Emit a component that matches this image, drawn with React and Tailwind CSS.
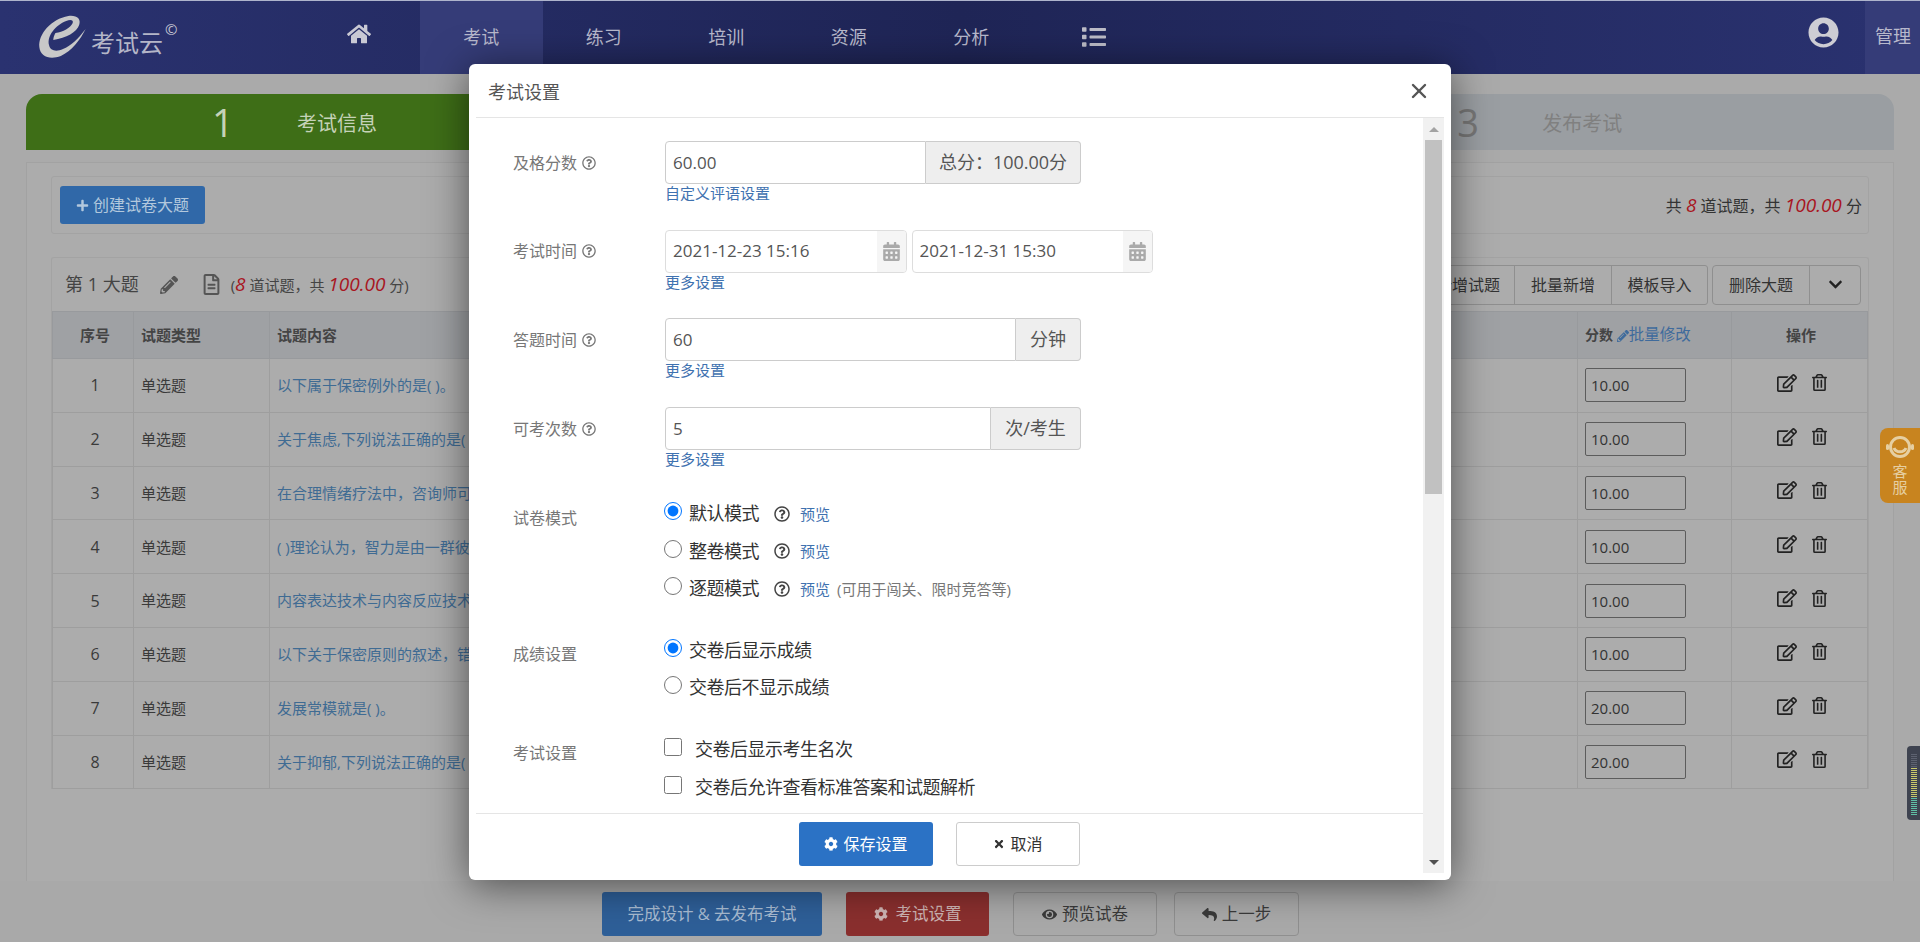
import { FaHome, FaList, FaUserCircle, FaPlus, FaPencilAlt, FaRegFileAlt, FaChevronDown, FaRegEdit, FaRegTrashAlt, FaRegQuestionCircle, FaCalendarAlt, FaCog, FaTimes, FaEye, FaReply } from 'react-icons/fa';
import { X } from 'lucide-react';

const navItems = ['考试', '练习', '培训', '资源', '分析'];

const questions = [
  { no: 1, text: '以下属于保密例外的是( )。', score: '10.00' },
  { no: 2, text: '关于焦虑,下列说法正确的是( )。', score: '10.00' },
  { no: 3, text: '在合理情绪疗法中，咨询师可以( )。', score: '10.00' },
  { no: 4, text: '( )理论认为，智力是由一群彼此( )。', score: '10.00' },
  { no: 5, text: '内容表达技术与内容反应技术的区别( )。', score: '10.00' },
  { no: 6, text: '以下关于保密原则的叙述，错误的是( )。', score: '10.00' },
  { no: 7, text: '发展常模就是( )。', score: '20.00' },
  { no: 8, text: '关于抑郁,下列说法正确的是( )。', score: '20.00' },
];

const Logo = () => (
  <svg width="56" height="46" viewBox="0 0 52 46" className="shrink-0" preserveAspectRatio="none">
    <path d="M4 33C3 20 15 5 31 2c8-1 12 3 10 9-2 7-12 13-24 15 0-3 1-5 2-7 7-1 14-5 16-10 1-3-2-4-6-2C19 11 11 22 13 31c1 6 7 7 13 4 7-3 14-10 21-20-5 11-13 22-23 27-10 4-19 1-20-9z" fill="#c8c8c8" />
  </svg>
);

const Headset = () => (
  <svg width="30" height="30" viewBox="0 0 30 30">
    <circle cx="15" cy="14" r="9.5" fill="none" stroke="#e6cfa2" strokeWidth="3" />
    <path d="M9 15c2 5 10 5 12 0" fill="none" stroke="#e6cfa2" strokeWidth="3" />
    <rect x="1" y="11" width="3" height="6" rx="1.5" fill="#e6cfa2" />
    <rect x="26" y="11" width="3" height="6" rx="1.5" fill="#e6cfa2" />
  </svg>
);

const Step = ({ no, title, className, numClass, titleClass }) => (
  <div className={`flex-1 flex items-center pl-[186px] ${className}`}>
    <span className={`w-[20px] text-[38px] leading-none ${numClass}`}>{no}</span>
    <span className={`ml-[65px] mt-[4px] text-[20px] ${titleClass}`}>{title}</span>
  </div>
);

const FormRow = ({ label, link, children }) => (
  <div className="flex mb-[23.7px] h-[65px]">
    <div className="w-[152px] h-[43px] flex items-center text-[16px] text-[#777]">
      {label}
      <FaRegQuestionCircle className="ml-[5px] text-[14px] text-[#777]" />
    </div>
    <div>
      <div className="flex h-[43px] w-[416px]">{children}</div>
      <a className="block -mt-[2px] h-[22px] leading-[22px] text-[15px] text-[#3f72b0]">{link}</a>
    </div>
  </div>
);

const TextGroup = ({ value, addon, addonClass }) => (
  <>
    <input defaultValue={value} className="flex-1 min-w-0 border border-[#ccc] rounded-l-[4px] px-[7px] text-[17px] text-[#555] outline-none" />
    <span className={`flex items-center justify-center border border-l-0 border-[#ccc] rounded-r-[4px] bg-[#eee] text-[18px] text-[#555] ${addonClass}`}>{addon}</span>
  </>
);

const DateBox = ({ value }) => (
  <div className="flex w-[242px] h-[43px] border border-[#ddd] rounded-[4px] overflow-hidden">
    <input defaultValue={value} className="flex-1 min-w-0 px-[7px] text-[17px] text-[#555] outline-none" />
    <span className="w-[29px] flex items-center justify-center bg-[#f5f5f5] text-[#aaa] text-[19px]"><FaCalendarAlt /></span>
  </div>
);

const ModeRadio = ({ name, label, checked, children }) => (
  <div className="flex items-center h-[37.5px] text-[18px] text-[#333]">
    <input type="radio" name={name} defaultChecked={checked} className="w-[18px] h-[18px] -mt-[5px] -ml-[1px] accent-[#0075ff]" />
    <span className="ml-[7px] tracking-[-0.5px]">{label}</span>
    {children}
  </div>
);

const ModeExtra = ({ note }) => (
  <>
    <FaRegQuestionCircle className="ml-[15px] text-[16px] text-[#444]" />
    <a className="ml-[10px] mt-[1px] text-[15px] text-[#3f72b0]">预览</a>
    {note && <span className="ml-[7px] mt-[1px] text-[15px] text-[#777]">{note}</span>}
  </>
);

const CheckItem = ({ label }) => (
  <label className="flex items-center h-[38px] text-[18px] text-[#333]">
    <input type="checkbox" className="w-[18px] h-[18px] -mt-[4px] -ml-[1px]" />
    <span className="ml-[13px] tracking-[-0.5px]">{label}</span>
  </label>
);

const App = () => {
  return (
    <div className="relative h-[942px] overflow-hidden flex flex-col bg-[#aaa] font-['Open_Sans','Noto_Sans_CJK_SC',sans-serif]">
      <nav className="h-[74px] shrink-0 flex border-t border-[#aeb4cc] bg-[linear-gradient(90deg,#2a3270,#1f2556_50%,#2a3270)] text-[#b8b9cc]">
        <div className="w-[298px] flex items-start pl-[35px] pt-[13px]">
          <Logo />
          <span className="mt-[14px] text-[24px] leading-[30px] text-[#b4b6c8]">考试云</span>
          <span className="mt-[8px] ml-[2px] text-[15px] leading-none text-[#c4c4d2]">©</span>
        </div>
        <a className="w-[122px] flex items-center justify-center text-[#c9c9d4] text-[24px] pb-[8px]"><FaHome /></a>
        {navItems.map((item, i) => (
          <a key={item} className={`w-[122.5px] flex items-center justify-center text-[18px] ${i === 0 ? 'bg-[#353c78]' : ''}`}>{item}</a>
        ))}
        <a className="w-[122px] flex items-center justify-center text-[24px] text-[#bdbdc8] pb-[2px]"><FaList /></a>
        <div className="flex-1 flex justify-end">
          <span className="flex items-start pt-[16px] pr-[26px] text-[31px] text-[#cdcdd4]"><FaUserCircle /></span>
          <a className="w-[55px] bg-[#353c78] flex items-center pl-[10px] pb-[2px] text-[18px]">管理</a>
        </div>
      </nav>

      <main className="flex-1 min-h-0 flex flex-col px-[26px] pt-[20px]">
        <div className="h-[56px] shrink-0 flex rounded-t-[16px] overflow-hidden">
          <Step no="1" title="考试信息" className="bg-[#3e6e17]" numClass="text-[#c5d2b8]" titleClass="text-[#c5d2b8]" />
          <Step no="2" title="设计试卷" className="bg-[#9a9ea2]" numClass="text-[#777]" titleClass="text-[#808080]" />
          <Step no="3" title="发布考试" className="bg-[#9a9ea2]" numClass="text-[#777]" titleClass="text-[#808080]" />
        </div>

        <div className="flex-1 min-h-0 mt-[12px] border border-b-0 border-[#a2a2a2] bg-[#acacac] px-[24px] pt-[13px]">
          <div className="h-[58px] flex items-center justify-between border border-[#a3a3a3] rounded-[3px] pl-[8px] pr-[6px]">
            <button className="h-[38px] w-[145px] flex items-center justify-center gap-[4px] rounded-[3px] bg-[#3068a8] text-[16px] text-[#b3c8dd]">
              <FaPlus className="text-[13px]" />创建试卷大题
            </button>
            <p className="text-[16px] text-[#333]">
              共 <em className="text-[19px] text-[#a8161f]">8</em> 道试题，共 <em className="text-[19px] text-[#a8161f]">100.00</em> 分
            </p>
          </div>

          <section className="mt-[23px] border border-b-0 border-[#a3a3a3] rounded-t-[3px]">
            <div className="h-[53px] flex items-center justify-between pl-[13px] pr-[7px]">
              <div className="flex items-center text-[#444]">
                <span className="text-[18px]">第 1 大题</span>
                <FaPencilAlt className="ml-[21px] text-[18px] text-[#555]" />
                <FaRegFileAlt className="ml-[23px] text-[21px] text-[#555]" />
                <span className="ml-[9px] text-[15px]">
                  (<em className="text-[19px] text-[#a8161f]">8</em> 道试题，共 <em className="text-[19px] text-[#a8161f]">100.00</em> 分)
                </span>
              </div>
              <div className="flex gap-[4px] text-[16px] text-[#333]">
                <div className="flex h-[40px] border border-[#8f8f8f] rounded-[3px]">
                  <span className="px-[14px] flex items-center">新增试题</span>
                  <span className="w-[97px] flex items-center justify-center border-l border-[#8f8f8f]">批量新增</span>
                  <span className="w-[96px] flex items-center justify-center border-l border-[#8f8f8f]">模板导入</span>
                </div>
                <div className="flex h-[40px] border border-[#8f8f8f] rounded-[4px]">
                  <span className="w-[96px] flex items-center justify-center">删除大题</span>
                  <span className="w-[51px] flex items-center justify-center border-l border-[#8f8f8f] text-[15px] text-[#222]"><FaChevronDown /></span>
                </div>
              </div>
            </div>

            <table className="w-full table-fixed border-collapse text-[15px] text-[#3a3a3a]">
              <colgroup>
                <col className="w-[81px]" />
                <col className="w-[136px]" />
                <col />
                <col className="w-[154px]" />
                <col className="w-[136px]" />
              </colgroup>
              <thead>
                <tr className="h-[47px] bg-[#9fa1a4] font-bold text-[#444]">
                  <th className="border border-[#989a9d] text-center pl-[4px]">序号</th>
                  <th className="border border-[#989a9d] text-left pl-[7px]">试题类型</th>
                  <th className="border border-[#989a9d] text-left pl-[7px]">试题内容</th>
                  <th className="border border-[#989a9d] text-left pl-[7px] text-[14px]">
                    分数 <a className="font-normal text-[15.5px] text-[#3f6b9c]"><FaPencilAlt className="inline text-[12px]" />批量修改</a>
                  </th>
                  <th className="border border-[#989a9d] text-center pl-[3px]">操作</th>
                </tr>
              </thead>
              <tbody>
                {questions.map((q) => (
                  <tr key={q.no} className="h-[53.8px]">
                    <td className="border border-[#9e9e9e] text-center pl-[4px] text-[16px]">{q.no}</td>
                    <td className="border border-[#9e9e9e] pl-[7px]">单选题</td>
                    <td className="border border-[#9e9e9e] pl-[7px] text-[#3f6b93]">{q.text}</td>
                    <td className="border border-[#9e9e9e] pl-[7px]">
                      <input defaultValue={q.score} className="block w-[101px] h-[34px] rounded-[2px] border border-[#5c5c5c] px-[5px] text-[15px] text-[#333] outline-none" />
                    </td>
                    <td className="border border-[#9e9e9e]">
                      <div className="flex items-center justify-center gap-[14px] pl-[6px] -mt-[5px] text-[#222]">
                        <FaRegEdit className="text-[20px]" />
                        <FaRegTrashAlt className="text-[17px]" />
                      </div>
                    </td>
                  </tr>
                ))}
              </tbody>
            </table>
          </section>
        </div>
      </main>

      <footer className="h-[61px] shrink-0 flex items-start pt-[11px] pl-[602px] bg-[#a9a9a9] text-[16.5px]">
        <button className="w-[220px] h-[44px] rounded-[3px] bg-[#2e5f98] text-[#a9bcd2]">完成设计 &amp; 去发布考试</button>
        <button className="ml-[24px] w-[143px] h-[44px] flex items-center justify-center gap-[8px] rounded-[3px] bg-[#8a2f2e] text-[#cdb4b3]"><FaCog className="text-[14px]" />考试设置</button>
        <button className="ml-[24px] w-[144px] h-[44px] flex items-center justify-center gap-[5px] rounded-[4px] border border-[#8f8f8f] text-[#3a3a3a]"><FaEye className="text-[15px]" />预览试卷</button>
        <button className="ml-[17px] w-[125px] h-[44px] flex items-center justify-center gap-[5px] rounded-[4px] border border-[#8f8f8f] text-[#3a3a3a]"><FaReply className="text-[15px]" />上一步</button>
      </footer>

      <div className="absolute right-0 top-[428px] w-[40px] h-[75px] pt-[5px] flex flex-col items-center rounded-l-[8px] bg-[#c8841f] text-[#e6cfa2]">
        <Headset />
        <span className="text-[15px] leading-[16px] w-[16px] text-center">客服</span>
      </div>

      <div className="absolute right-0 top-[746px] w-[13px] h-[74px] rounded-l-[4px] bg-[#3e4350] pl-[4px] pt-[8px]">
        <div className="h-[14px] w-[6px] bg-[repeating-linear-gradient(#5d6270_0_1px,#3e4350_1px_2px)]" />
        <div className="h-[30px] w-[6px] bg-[repeating-linear-gradient(#c9c86a_0_1px,#3e4350_1px_2px)]" />
        <div className="h-[18px] w-[6px] bg-[repeating-linear-gradient(#5fbfa5_0_1px,#3e4350_1px_2px)]" />
      </div>

      <div className="absolute left-[469px] top-[64px] w-[982px] h-[816px] flex flex-col rounded-[6px] bg-white shadow-[0_5px_40px_rgba(0,0,0,0.55)]">
        <div className="h-[54px] shrink-0 mx-[7px] pl-[13px] pr-[13px] pt-[4px] flex items-center justify-between border-b border-[#e5e5e5]">
          <h4 className="-ml-[1px] text-[18px] text-[#555]">考试设置</h4>
          <X size={24} strokeWidth={2.4} className="-mt-[4px] text-[#555]" />
        </div>
        <div className="flex-1 min-h-0 flex">
          <div className="flex-1 min-w-0 flex flex-col">
            <div className="flex-1 min-h-0 overflow-hidden pl-[44px] pt-[23px]">
              <FormRow label="及格分数" link="自定义评语设置">
                <TextGroup value="60.00" addon="总分：100.00分" addonClass="w-[155px]" />
              </FormRow>
              <FormRow label="考试时间" link="更多设置">
                <div className="flex gap-[5px] w-[488px] shrink-0">
                  <DateBox value="2021-12-23 15:16" />
                  <DateBox value="2021-12-31 15:30" />
                </div>
              </FormRow>
              <FormRow label="答题时间" link="更多设置">
                <TextGroup value="60" addon="分钟" addonClass="w-[65px]" />
              </FormRow>
              <FormRow label="可考次数" link="更多设置">
                <TextGroup value="5" addon="次/考生" addonClass="w-[90px]" />
              </FormRow>

              <div className="flex -mt-[3.8px]">
                <div className="w-[152px] pt-[14px] text-[16px] leading-[24px] text-[#777]">试卷模式</div>
                <div className="pt-[3px]">
                  <ModeRadio name="mode" label="默认模式" checked><ModeExtra /></ModeRadio>
                  <ModeRadio name="mode" label="整卷模式"><ModeExtra /></ModeRadio>
                  <ModeRadio name="mode" label="逐题模式"><ModeExtra note="(可用于闯关、限时竞答等)" /></ModeRadio>
                </div>
              </div>
              <div className="flex mt-[21px]">
                <div className="w-[152px] pt-[14px] text-[16px] leading-[24px] text-[#777]">成绩设置</div>
                <div className="pt-[3px]">
                  <ModeRadio name="score" label="交卷后显示成绩" checked />
                  <ModeRadio name="score" label="交卷后不显示成绩" />
                </div>
              </div>
              <div className="flex mt-[21px]">
                <div className="w-[152px] pt-[14px] text-[16px] leading-[24px] text-[#777]">考试设置</div>
                <div className="pt-[3px]">
                  <CheckItem label="交卷后显示考生名次" />
                  <CheckItem label="交卷后允许查看标准答案和试题解析" />
                </div>
              </div>
            </div>
            <div className="h-[67px] shrink-0 ml-[7px] pl-[323px] pt-[8px] flex items-start gap-[23px] border-t border-[#e5e5e5] bg-white text-[16px]">
              <button className="w-[134px] h-[44px] flex items-center justify-center gap-[5px] rounded-[3px] bg-[#2b72c5] text-white"><FaCog className="text-[14px]" />保存设置</button>
              <button className="w-[124px] h-[44px] flex items-center justify-center gap-[5px] rounded-[3px] border border-[#ccc] text-[#333]"><FaTimes className="text-[12px]" />取消</button>
            </div>
          </div>
          <div className="w-[21px] mr-[7px] mb-[7px] shrink-0 flex flex-col items-center bg-[#f1f1f1]">
            <div className="h-[22px] w-full flex items-center justify-center">
              <span className="w-0 h-0 border-x-[5px] border-x-transparent border-b-[5px] border-b-[#a3a3a3]" />
            </div>
            <div className="h-[354px] w-[17px] bg-[#c1c1c1]" />
            <div className="mt-auto h-[22px] w-full flex items-center justify-center">
              <span className="w-0 h-0 border-x-[5px] border-x-transparent border-t-[5px] border-t-[#505050]" />
            </div>
          </div>
        </div>
      </div>
    </div>
  );
};

export default App;
